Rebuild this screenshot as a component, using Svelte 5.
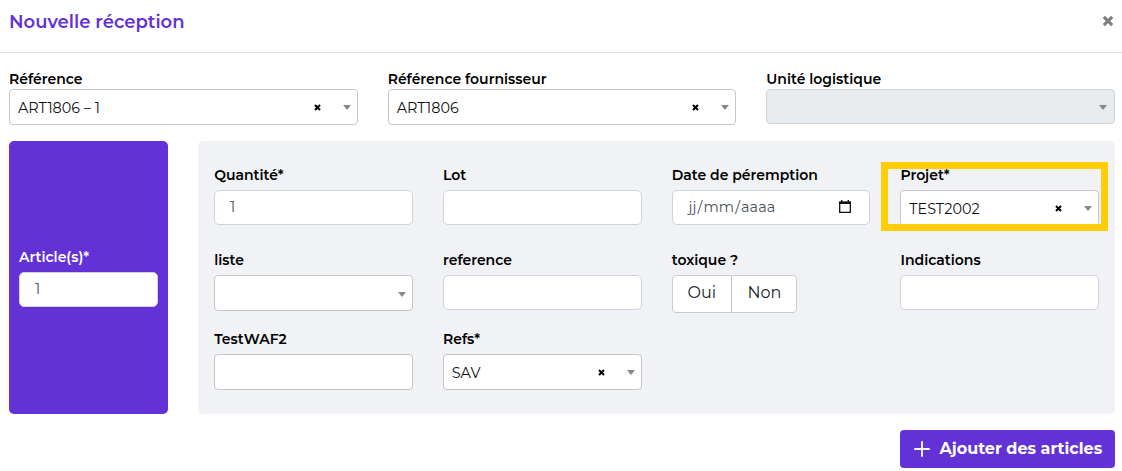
<script>
  const top = [
    { label: 'Référence', kind: 'select', value: 'ART1806 – 1' },
    { label: 'Référence fournisseur', kind: 'select', value: 'ART1806' },
    { label: 'Unité logistique', kind: 'disabled' }
  ];
  const fields = [
    { label: 'Quantité*', kind: 'input', value: '1' },
    { label: 'Lot', kind: 'input' },
    { label: 'Date de péremption', kind: 'date' },
    { label: 'Projet*', kind: 'select', value: 'TEST2002', marked: true },
    { label: 'liste', kind: 'select' },
    { label: 'reference', kind: 'input' },
    { label: 'toxique ?', kind: 'toggle' },
    { label: 'Indications', kind: 'input' },
    { label: 'TestWAF2', kind: 'plain' },
    { label: 'Refs*', kind: 'select', value: 'SAV' }
  ];
</script>

{#snippet cross()}
  <svg class="cross" viewBox="0 0 10 10"><path d="M2.2 2.2L7.8 7.8M7.8 2.2L2.2 7.8" /></svg>
{/snippet}

{#snippet field(f)}
  <div class="field">
    <div class="label">{f.label}</div>
    {#if f.kind === 'select' || f.kind === 'disabled'}
      <div class="control select" class:disabled={f.kind === 'disabled'}>
        {#if f.value}
          <span class="value">{f.value}</span>
          {@render cross()}
        {/if}
        <i class="caret"></i>
      </div>
    {:else if f.kind === 'toggle'}
      <div class="toggle">
        <div class="oui">Oui</div>
        <div class="non">Non</div>
      </div>
    {:else if f.kind === 'date'}
      <div class="control input date">
        <span><b>jj</b>/<b>mm</b>/<b>aaaa</b></span>
        <svg width="12" height="13" viewBox="0 0 12 13"><path d="M.7 2.5h10.6v9.8H.7z" /><path class="bar" d="M0 1.5h12v2.5H0zM2 0h1.4v2H2zM8.6 0H10v2H8.6z" /></svg>
      </div>
    {:else}
      <div class="control input" class:plain={f.kind === 'plain'}>{f.value ?? ''}</div>
    {/if}
    {#if f.marked}<div class="marker"></div>{/if}
  </div>
{/snippet}

<main>
  <header>
    <h1>Nouvelle réception</h1>
    <svg class="close" viewBox="0 0 10 10"><path d="M1.5 1.5L8.5 8.5M8.5 1.5L1.5 8.5" /></svg>
  </header>

  <section class="top">
    {#each top as f}{@render field(f)}{/each}
  </section>

  <section class="body">
    <aside>
      <div class="field">
        <div class="label">Article(s)*</div>
        <div class="control input">1</div>
      </div>
    </aside>
    <div class="panel">
      {#each fields as f}{@render field(f)}{/each}
    </div>
  </section>

  <footer>
    <button>
      <svg width="16" height="16" viewBox="0 0 16 16"><path d="M8 .9v14.2M.9 8h14.2" /></svg>
      <span>Ajouter des articles</span>
    </button>
  </footer>
</main>

<style>
  :global(body) { margin: 0; background: #fff; overflow: hidden; }
  main {
    width: 1122px;
    height: 471px;
    box-sizing: border-box;
    font-family: Montserrat, Inter, sans-serif;
    font-size: 14px;
    color: #000;
    white-space: nowrap;
  }
  header {
    height: 52px;
    border-bottom: 1px solid #dee2e6;
    display: flex;
    justify-content: space-between;
    padding: 0 9px;
  }
  h1 { margin: 0; padding-top: 10px; font-size: 18px; line-height: 24px; font-weight: 600; color: #6332d6; }
  .close { width: 12px; height: 12px; margin: 15px -1px 0 0; fill: none; stroke: #7f7f7f; stroke-width: 2.6; }
  .top { display: grid; grid-template-columns: repeat(3, 1fr); gap: 30px; padding: 16px 7px 0 9px; height: 72px; }
  .label { height: 20px; line-height: 20px; font-weight: 600; }
  .field { position: relative; min-width: 0; }
  .control {
    box-sizing: border-box;
    height: 35px;
    border: 1px solid #ced4da;
    border-radius: 5px;
    background: #fff;
    display: flex;
    align-items: center;
  }
  .input { padding: 0 15px 2px; font-weight: 400; font-size: 14.4px; color: #495057; }
  .select { height: 36px; border-color: #c6c6c6; border-radius: 4px; padding: 0 6px 0 8px; }
  .plain { height: 36px; border-color: #c6c6c6; border-radius: 4px; }
  .disabled { height: 35px; border-color: #ced4da; background: #e8ebee; padding-right: 7px; }
  .select .value { font-size: 14.4px; font-weight: 400; color: #111; padding-top: 1px; }
  .cross { width: 9px; height: 9px; margin: 1px 0 0 auto; fill: none; stroke: #000; stroke-width: 2.2; }
  .caret {
    width: 0;
    height: 0;
    margin-left: auto;
    margin-top: 2px;
    border: 4px solid transparent;
    border-top: 5px solid #888;
    border-bottom: 0;
  }
  .cross + .caret { margin-left: 21px; margin-top: 0; }
  .date { justify-content: space-between; padding-right: 18px; }
  .date b { font-weight: 400; padding: 0 1px; letter-spacing: 0.1px; }
  .date svg { fill: none; stroke: #111; stroke-width: 1.3; margin-bottom: 1px; }
  .date .bar { fill: #111; stroke: none; }
  .body { display: flex; gap: 30px; padding: 0 7px 0 9px; height: 273px; }
  aside {
    box-sizing: border-box;
    width: 159px;
    border-radius: 5px;
    background: #6332d6;
    padding: 106px 10px 0;
  }
  aside .label { color: #fff; margin-bottom: 5px; }
  .panel {
    flex: 1;
    box-sizing: border-box;
    border-radius: 5px;
    background: #f1f2f6;
    padding: 24px 16px 0;
    display: grid;
    grid-template-columns: repeat(4, 1fr);
    grid-template-rows: 85px 79px 61px;
    column-gap: 30px;
  }
  .panel .label { margin-bottom: 5px; padding-left: 0.2px; }
  .toggle { display: flex; width: 125px; height: 38px; box-sizing: border-box; border: 1px solid #c8ccd0; border-radius: 4px; background: #fff; font-size: 16px; font-weight: 400; line-height: 34px; color: #212529; }
  .oui { padding-left: 15px; box-sizing: border-box; border-right: 1px solid #c4c8cc; flex: 0 0 59px; }
  .non { padding-left: 16px; }
  .marker { position: absolute; left: -19px; top: -3px; width: 227px; height: 69px; box-sizing: border-box; border: 7px solid #ffcd05; }
  footer { display: flex; justify-content: flex-end; padding: 16px 7px 0 0; }
  button {
    width: 215px;
    height: 38px;
    border: 0;
    border-radius: 4px;
    background: #6332d6;
    color: #fff;
    padding: 0 0 0 14px;
    display: flex;
    align-items: center;
    gap: 9.5px;
    font: 700 16px Montserrat, Inter, sans-serif;
    white-space: nowrap;
  }
  button span { margin-top: -1px; }
  button svg { fill: none; stroke: #fff; stroke-width: 1.8; stroke-linecap: round; flex: none; }
</style>
